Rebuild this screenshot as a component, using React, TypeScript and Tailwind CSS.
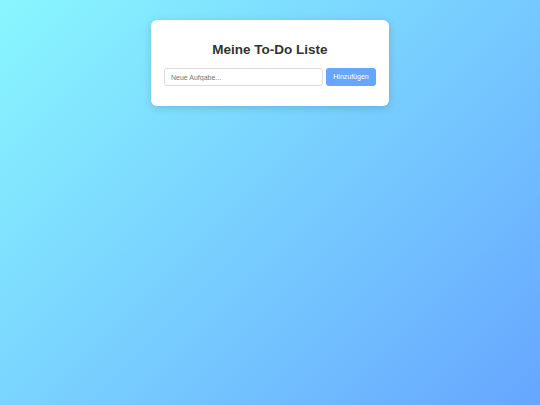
export default function App() {
  return (
    <div
      className="w-[540px] h-[405px] flex flex-col items-center bg-[linear-gradient(135deg,#89f7fe_0%,#66a6ff_100%)]"
      style={{ fontFamily: '"Liberation Sans", Arial, sans-serif' }}
    >
      <div className="mt-[20px] w-[238px] bg-white rounded-[6px] shadow-[0_2px_8px_rgba(0,0,0,0.15)] px-[13px] pt-[20px] pb-[20px]">
        <h1 className="text-center text-[13.5px] leading-[20px] font-bold text-[#333] mb-[8px]">Meine To-Do Liste</h1>
        <div className="flex gap-[3px]">
          <input
            className="flex-1 min-w-0 h-[18px] border border-[#ddd] rounded-[3px] px-[6px] text-[7px] text-[#333] placeholder:text-[#757575] outline-none"
            placeholder="Neue Aufgabe..."
          />
          <button className="w-[50px] h-[18px] bg-[#66a6ff] text-white text-[7px] rounded-[3px]">Hinzufügen</button>
        </div>
      </div>
    </div>
  );
}
